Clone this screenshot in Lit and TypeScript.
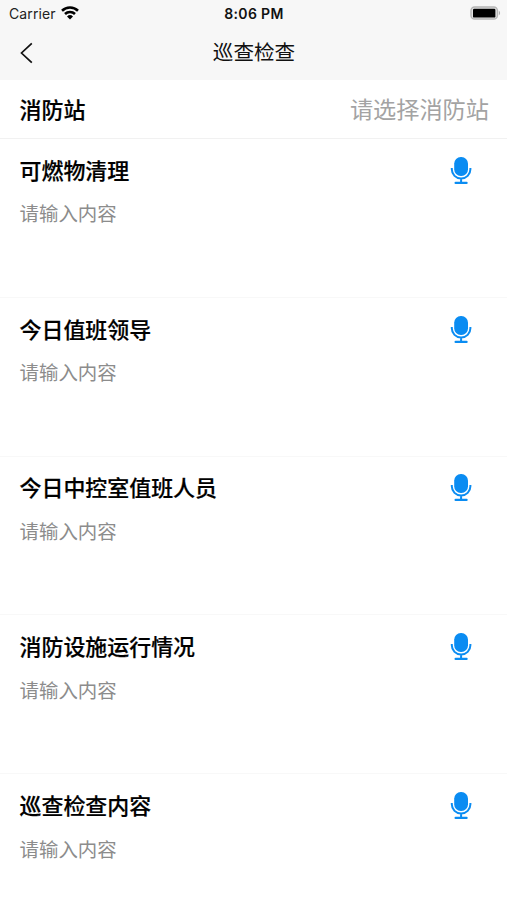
import { LitElement, html, css } from "lit";
import { customElement } from "lit/decorators.js";

const FIELDS = ["可燃物清理", "今日值班领导", "今日中控室值班人员", "消防设施运行情况", "巡查检查内容"];

@customElement("app-root")
export class AppRoot extends LitElement {
  static styles = css`
    :host { display: block; height: 900px; overflow: hidden; background: #fff; color: #000; font-family: Inter, "Noto Sans CJK SC", sans-serif; }
    header { height: 80px; background: #f7f7f7; box-sizing: border-box; }
    .status { height: 27px; display: grid; grid-template-columns: 1fr auto 1fr; align-items: center; padding: 0 7px 0 9px; font-size: 14px; }
    .carrier { display: flex; align-items: center; gap: 5px; color: #222; letter-spacing: 0.12px; }
    .wifi { margin-bottom: 2px; }
    .time { font-weight: 600; color: #111; letter-spacing: 0.35px; margin-right: 1px; }
    .battery { justify-self: end; display: block; margin-bottom: 1px; margin-right: -1px; }
    .nav { height: 50px; display: grid; grid-template-columns: 60px 1fr 60px; align-items: center; }
    .back { margin: 2px 0 0 19px; display: block; }
    .title { text-align: center; font-size: 20.6px; color: #111; margin: 0 0 2px 1px; }
    .station { height: 58px; padding: 0 18px 0 19.5px; border-bottom: 1px solid #f1f1f1; display: flex; align-items: center; justify-content: space-between; }
    .label { font-size: 21.95px; font-weight: 500; line-height: 32px; -webkit-text-stroke: 0.2px #000; }
    .station .label, .pick { margin-top: 2px; }
    .pick { font-size: 23.2px; color: #a3a3a3; line-height: 32px; }
    .field { height: 158.8px; box-sizing: border-box; border-bottom: 1px solid #f8f8f8; padding: 15.8px 35px 0 19.5px; }
    .row { display: flex; justify-content: space-between; height: 32px; align-items: center; }
    .hint { font-size: 19.45px; line-height: 28px; color: #8c8c8c; margin-top: 13.6px; }
  `;

  render() {
    return html`
      <header>
        <div class="status">
          <div class="carrier"><span>Carrier</span>
            <svg class="wifi" width="18" height="14" viewBox="0 0 18 14"><g fill="none" stroke="#000" stroke-width="2.6"><path d="M1 4.8a11.5 11.5 0 0 1 16 0"/><path d="M4 8a7.2 7.2 0 0 1 10 0"/></g><path d="M9 13.4L6 10.4a4.3 4.3 0 0 1 6 0z"/></svg>
          </div>
          <span class="time">8:06 PM</span>
          <svg class="battery" width="31" height="14" viewBox="0 0 31 14"><rect x="1" y="1" width="26.4" height="12" rx="3.6" fill="#e4e4e4" stroke="#b5b5b5" stroke-width="1.4"/><rect x="3" y="2.8" width="22.4" height="8.8" rx="1.2"/><path d="M28.8 4.6q2.6 2.4 0 4.8z" fill="#aaa"/></svg>
        </div>
        <div class="nav">
          <svg class="back" width="15" height="22" viewBox="0 0 15 22"><path d="M12.8 1.3L2.5 11l10.3 9.7" fill="none" stroke="#111" stroke-width="1.7"/></svg>
          <div class="title">巡查检查</div>
        </div>
      </header>
      <div class="station"><span class="label">消防站</span><span class="pick">请选择消防站</span></div>
      ${FIELDS.map((f) => html`<section class="field">
        <div class="row"><span class="label">${f}</span>
          <svg width="22" height="28" viewBox="0 0 22 28"><rect x="4.2" y="0" width="13.8" height="19" rx="6.6" fill="#0a8cf2"/><path d="M1.8 11v1.3a9.3 9.3 0 0 0 18.6 0V11M11.1 21v4.5" fill="none" stroke="#0a8cf2" stroke-width="2"/><path d="M5.6 25.9h11" fill="none" stroke="#0a8cf2" stroke-width="2.2" stroke-linecap="round"/></svg>
        </div>
        <div class="hint">请输入内容</div>
      </section>`)}
    `;
  }
}
